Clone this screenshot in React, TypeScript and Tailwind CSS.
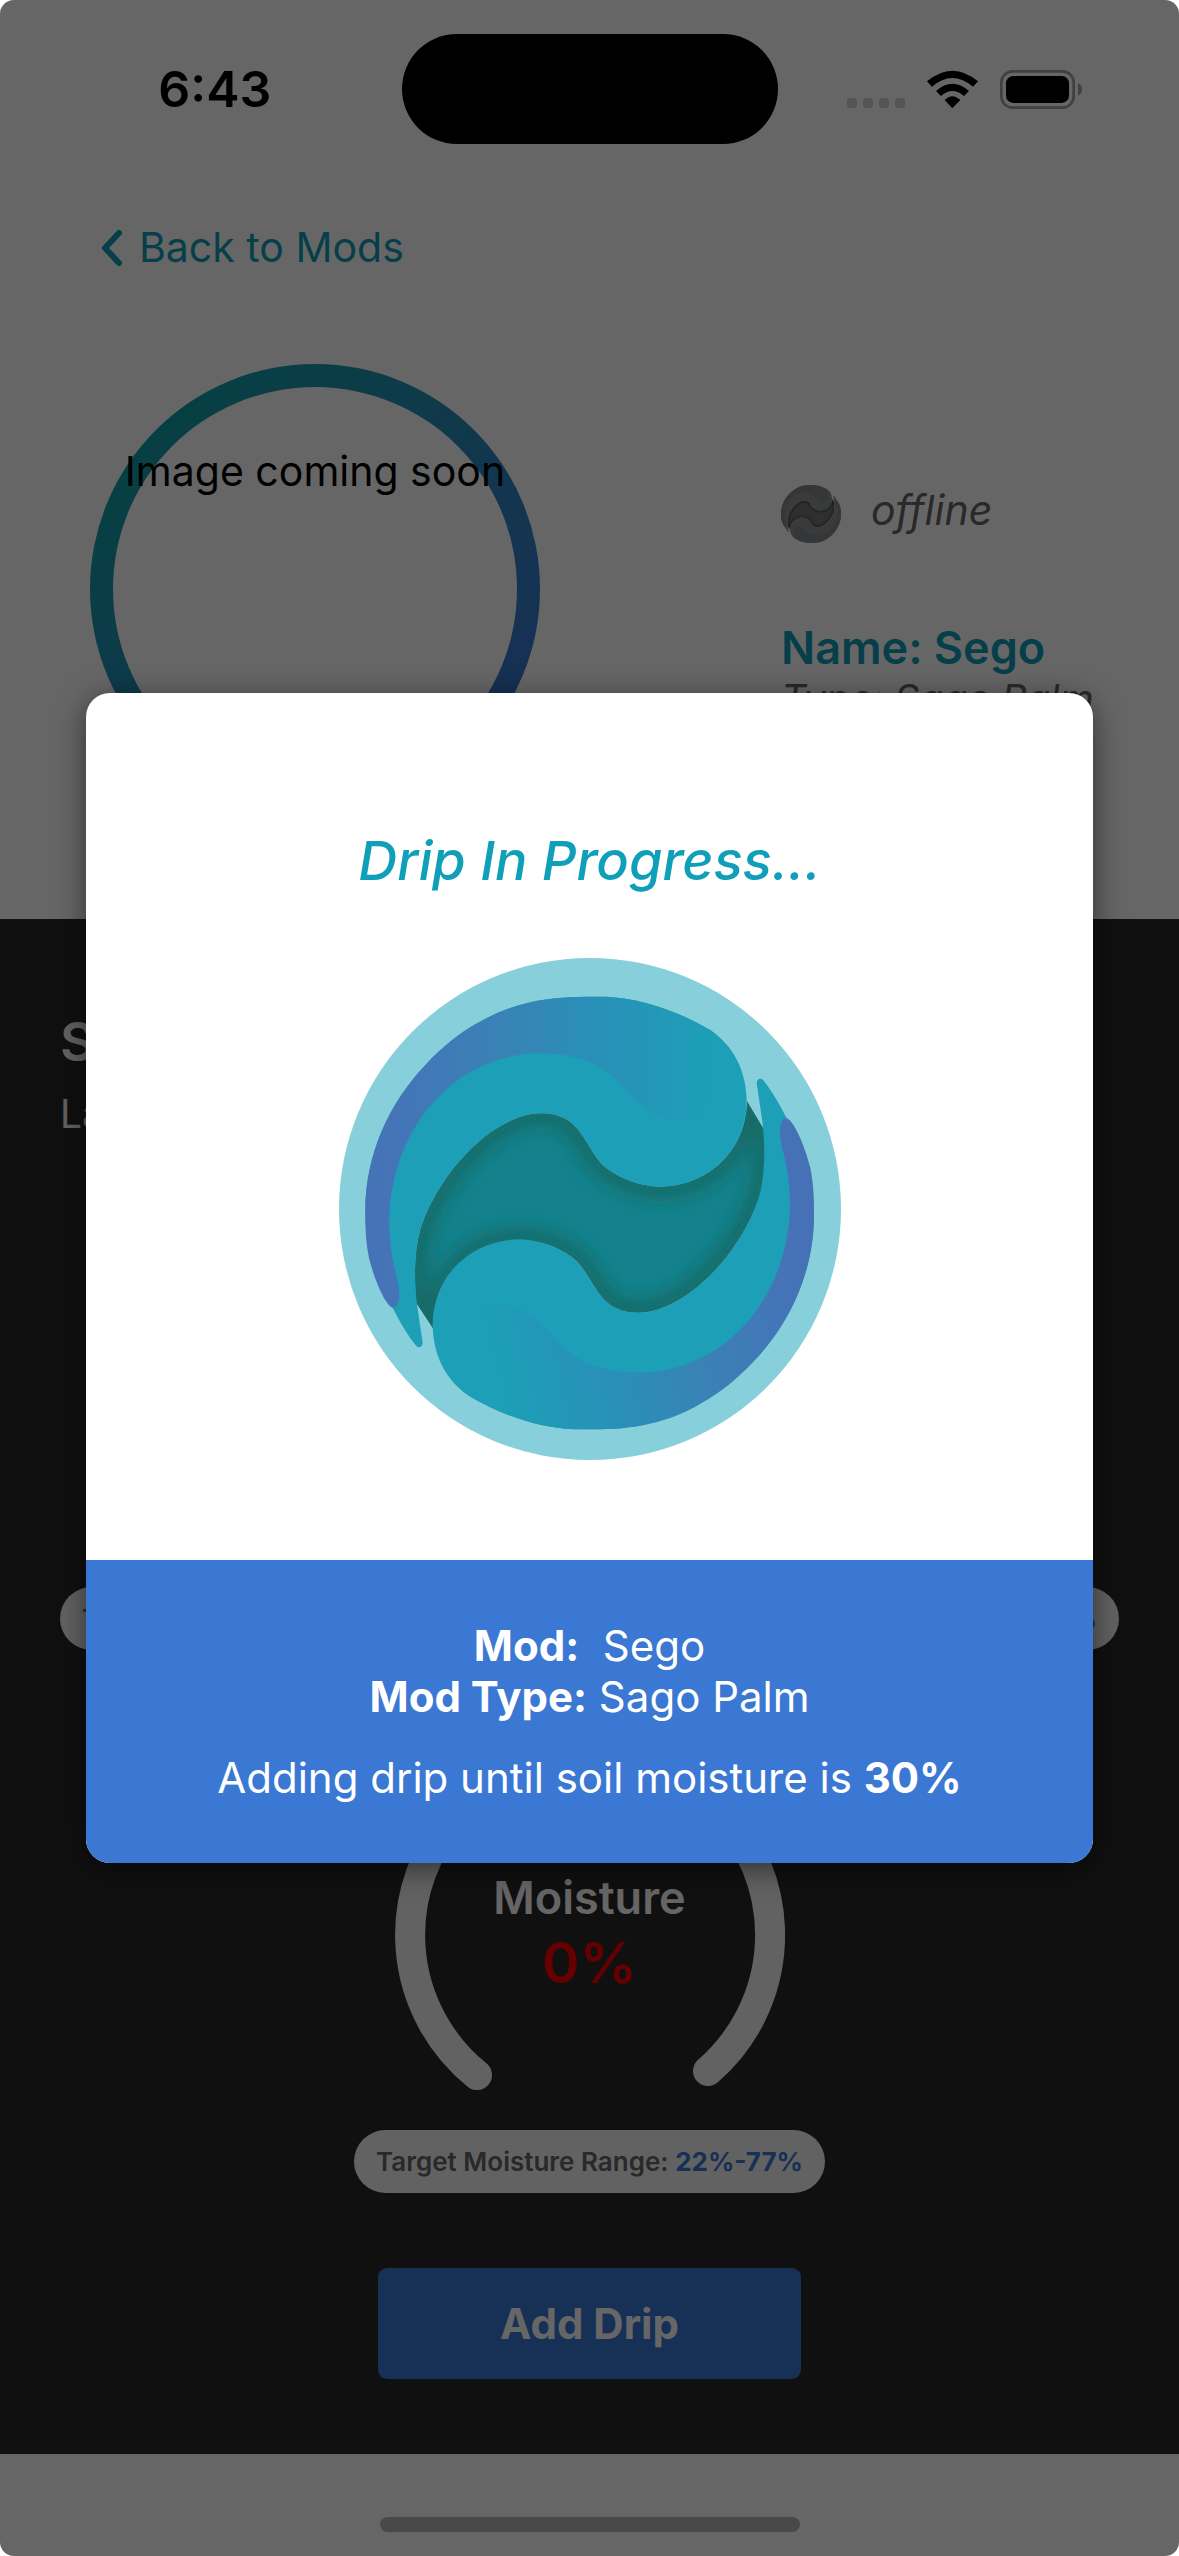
import type { ReactNode } from "react";

const WAVE =
  "M230 1162 C200 1125 180 1085 160 1048 C105 950 79 860 79 760 C79 590 150 435 260 320 C310 267 362 224 420 193 C520 135 620 116 745 116 L800 116 C900 120 1010 155 1115 217 C1185 265 1222 340 1223 430 C1222 580 1105 686 960 686 C890 683 830 655 790 620 C730 555 725 466 605 466 C480 466 310 620 245 810 C225 880 225 960 234 1040 L251 1155 C250 1168 238 1172 230 1162Z";
const CREST =
  "M163 1049 C145 1050 110 980 90 900 C80 850 79 810 79 760 C79 590 150 435 260 320 C310 267 362 224 420 193 C520 135 620 116 745 116 L800 116 C900 120 1010 155 1115 217 L1115 430 C1100 475 1060 487 1010 487 C930 480 890 430 840 375 C790 310 690 286 600 286 C340 290 150 520 151 800 C153 920 182 960 181 1010 C180 1035 172 1048 163 1049Z";
const CORE =
  "M288 1120 L232 1035 C225 960 225 880 245 810 C310 620 480 466 605 466 C725 466 730 555 790 620 C830 655 890 683 960 686 C1105 686 1222 580 1224 430 L1278 520 C1285 570 1282 650 1261 720 C1194 910 1024 1064 899 1064 C779 1064 774 975 714 910 C674 875 614 847 544 847 C399 847 282 960 288 1120Z";

type LogoProps = {
  id: string;
  viewBox: string;
  className: string;
  wave: string;
  crest: [string, string, string, string];
  core: string;
  shade: string;
  disc?: string;
};

function WaveLogo({ id, viewBox, className, wave, crest, core, shade, disc }: LogoProps) {
  const stops = (
    <>
      <stop offset="0" stopColor={crest[0]} />
      <stop offset="0.35" stopColor={crest[1]} />
      <stop offset="0.65" stopColor={crest[2]} />
      <stop offset="1" stopColor={crest[3]} />
    </>
  );
  return (
    <svg viewBox={viewBox} className={className} aria-hidden="true">
      <defs>
        <linearGradient id={`${id}-a`} gradientUnits="userSpaceOnUse" x1="79" y1="0" x2="1110" y2="0">
          {stops}
        </linearGradient>
        <linearGradient id={`${id}-b`} gradientUnits="userSpaceOnUse" x1="104" y1="550" x2="1034" y2="300">
          {stops}
        </linearGradient>
        <clipPath id={`${id}-c`}>
          <path d={CORE} />
        </clipPath>
        <filter id={`${id}-f`} x="-10%" y="-10%" width="120%" height="120%">
          <feGaussianBlur stdDeviation="28" />
        </filter>
      </defs>
      {disc && <circle cx="753" cy="753" r="753" fill={disc} />}
      <path d={CORE} fill={core} />
      <g clipPath={`url(#${id}-c)`}>
        <path d={CORE} fill="none" stroke={shade} strokeWidth="70" filter={`url(#${id}-f)`} />
      </g>
      <path d={WAVE} fill={wave} />
      <path d={CREST} fill={`url(#${id}-a)`} />
      <g transform="rotate(180 752 765)">
        <path d={WAVE} fill={wave} />
        <path d={CREST} fill={`url(#${id}-b)`} />
      </g>
    </svg>
  );
}

function StatusBar() {
  return (
    <header className="grid grid-cols-[1fr_376px_1fr] items-center pt-[34px]">
      <div className="pl-7 text-center text-[50px] leading-[60px] font-semibold text-black">6:43</div>
      <div className="h-[110px] rounded-full bg-black" />
      <div className="flex items-end justify-center gap-[22px] pr-7">
        <svg viewBox="0 0 174 30" className="mb-px h-[10px] w-[58px]" fill="#d4d4d4" aria-hidden="true">
          <rect width="30" height="30" rx="10" />
          <rect x="48" width="30" height="30" rx="10" />
          <rect x="96" width="30" height="30" rx="10" />
          <rect x="144" width="30" height="30" rx="10" />
        </svg>
        <svg viewBox="318 84 153 117" className="h-[39px] w-[51px]" aria-hidden="true">
          <path d="M318 118 Q394 54 471 118 L456 134 Q394 82 333 134Z" />
          <path d="M345 147 Q394 103 444 147 L429 162 Q394 132 360 162Z" />
          <path d="M371 174 Q394 151 418 174 L394 199Z" />
        </svg>
        <svg viewBox="537 84 246 117" className="h-[39px] w-[82px]" aria-hidden="true">
          <rect x="541" y="88" width="217" height="109" rx="34" fill="none" stroke="#a0a0a0" strokeWidth="8" />
          <rect x="555" y="102" width="189" height="81" rx="22" />
          <path d="M771 123 Q783 129 783 142 Q783 155 771 161Z" fill="#a0a0a0" />
        </svg>
      </div>
    </header>
  );
}

function Pill({ label, value }: { label: string; value: string }) {
  return (
    <div className="rounded-full bg-[#f5f5f5] px-[22px] py-[15px] text-[26px] leading-[33px] font-semibold whitespace-nowrap text-[#666]">
      {label} <span className="font-bold text-[#3a78d4]">{value}</span>
    </div>
  );
}

function Gauge({ children }: { children: ReactNode }) {
  return (
    <div className="relative size-[390px]">
      <svg viewBox="0 0 390 390" className="size-full" aria-hidden="true">
        <path
          d="M82 335 A180 180 0 1 1 313 331"
          fill="none"
          stroke="#f5f5f5"
          strokeWidth="30"
          strokeLinecap="round"
        />
      </svg>
      <div className="absolute inset-0 pt-[131px] text-center">{children}</div>
    </div>
  );
}

function DripDialog() {
  return (
    <div className="absolute inset-0 flex items-center bg-black/60 px-[86px]">
      <section
        role="dialog"
        aria-modal="true"
        aria-labelledby="drip-title"
        className="w-full overflow-hidden rounded-[24px] bg-white text-center shadow-[0_6px_30px_rgba(0,0,0,0.5)]"
      >
        <div className="flex flex-col items-center pt-[135px] pb-[100px]">
          <h2 id="drip-title" className="text-[54px] leading-[66px] font-medium text-[#109fb8] italic">
            Drip In Progress...
          </h2>
          <WaveLogo
            id="hero"
            viewBox="0 0 1506 1506"
            className="mt-16 size-[502px]"
            wave="#1c9fb7"
            crest={["#4771b7", "#3b80b6", "#2a8fb8", "#1c9fb7"]}
            core="#13828c"
            shade="#126a66"
            disc="#87cfda"
          />
        </div>
        <div className="bg-[#3a78d4] py-[60px] text-[42px] leading-[51px] text-white">
          <p>
            <strong className="font-bold">Mod:</strong>&nbsp; Sego
          </p>
          <p>
            <strong className="font-bold">Mod Type:</strong> Sago Palm
          </p>
          <p className="mt-[30px]">
            Adding drip until soil moisture is <strong className="font-bold">30%</strong>
          </p>
        </div>
      </section>
    </div>
  );
}

export default function App() {
  return (
    <div className="bg-white">
      <div className="relative flex min-h-screen flex-col overflow-hidden rounded-[14px] bg-white font-['Inter',sans-serif]">
        <StatusBar />

        <nav className="mt-[78px] px-[101px]">
          <a href="#mods" className="flex items-center gap-[16px] text-[41px] leading-[51px] text-[#109fb8]">
            <svg viewBox="0 0 22 38" className="h-[38px] w-[22px]" aria-hidden="true">
              <path
                d="M18 4 L4 19 L18 34"
                fill="none"
                stroke="currentColor"
                strokeWidth="6"
                strokeLinecap="round"
                strokeLinejoin="round"
              />
            </svg>
            Back to Mods
          </a>
        </nav>

        <section className="mt-[91px] flex justify-between pb-[105px] pl-[90px]">
          <div className="size-[450px] shrink-0 rounded-full bg-linear-to-br from-[#109fa8] from-15% to-[#3a78d4] to-85% p-[23px]">
            <div className="size-full rounded-full bg-white pt-[59px] text-center text-[41px] leading-[51px] whitespace-nowrap text-black">
              Image coming soon
            </div>
          </div>
          <div className="w-[398px] pt-[121px] text-[#666] italic">
            <div className="flex items-start gap-[30px]">
              <WaveLogo
                id="status"
                viewBox="79 116 1345 1300"
                className="h-[58px] w-[60px]"
                wave="#8d9296"
                crest={["#83888c", "#83888c", "#83888c", "#83888c"]}
                core="#767676"
                shade="#505050"
              />
              <span className="text-[41px] leading-[51px] [font-variant-ligatures:none]">offline</span>
            </div>
            <h1 className="mt-[78px] text-[45px] leading-[54px] font-semibold text-[#109fb8] not-italic">
              Name: Sego
            </h1>
            <p className="text-[39px] leading-[48px]">Type: Sago Palm</p>
          </div>
        </section>

        <main className="flex flex-1 flex-col items-center bg-[#282828] px-[60px] pt-[90px] pb-[75px]">
          <div className="self-start text-[#f5f5f5]">
            <h2 className="text-[54px] leading-[66px] font-semibold">Stats</h2>
            <p className="mt-[15px] text-[39px] leading-[48px]">Last updated</p>
          </div>
          <div className="mt-[449px] flex w-full justify-between">
            <Pill label="Temp Range:" value="60°-80°" />
            <Pill label="Humidity Range:" value="40%-60%" />
          </div>
          <div className="mt-[90px]">
            <Gauge>
              <h3 className="text-[45px] leading-[54px] font-semibold text-white">Moisture</h3>
              <p className="text-[57px] leading-[76px] font-semibold text-[#f00]">0%</p>
            </Gauge>
          </div>
          <Pill label="Target Moisture Range:" value="22%-77%" />
          <button
            type="button"
            className="mt-[75px] w-[423px] rounded-[9px] bg-[#3a78d4] py-[30px] text-[42px] leading-[51px] font-bold text-white"
          >
            Add Drip
          </button>
        </main>

        <footer className="flex justify-center pt-[63px] pb-6">
          <div className="h-[15px] w-[420px] rounded-full bg-[#b6b6b6]" />
        </footer>

        <DripDialog />
      </div>
    </div>
  );
}
